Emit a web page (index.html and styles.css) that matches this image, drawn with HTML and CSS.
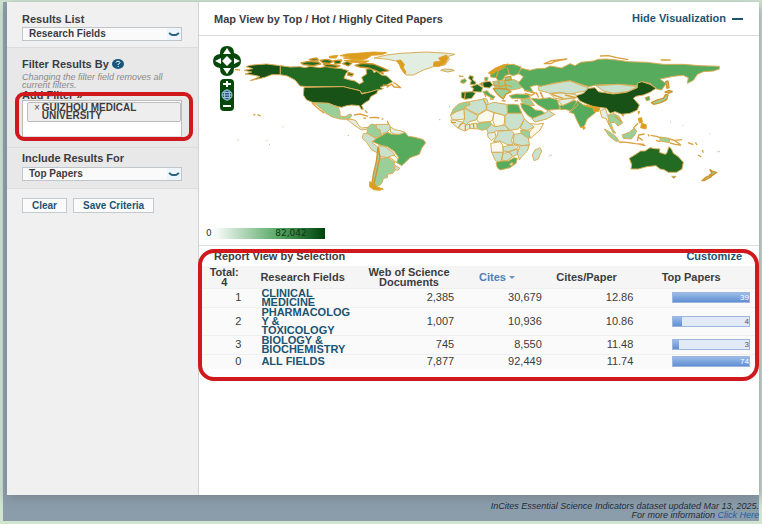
FILE: index.html
```html
<!DOCTYPE html>
<html lang="en">
<head>
<meta charset="utf-8">
<title>InCites Essential Science Indicators</title>
<link rel="stylesheet" href="styles.css">
</head>
<body>
<div class="frame">
  <div class="page">
    <aside class="sidebar">
      <section class="group">
        <label class="label" for="results-list">Results List</label>
        <div class="select-wrap">
          <select id="results-list" class="select"><option>Research Fields</option></select>
          <svg class="chevron" viewBox="0 0 14 12" aria-hidden="true"><path d="M2 5L5 7H9L12 5"/></svg>
        </div>
      </section>
      <section class="group group-filter">
        <h2 class="label">Filter Results By
          <svg class="help" viewBox="0 0 12 10" aria-hidden="true"><ellipse cx="6" cy="5" rx="6" ry="5"/><path d="M4 3.6Q4.300 2.200 6 2.200Q8 2.300 8 3.700Q7.800 4.700 6.200 5.200V6M6.200 7V8"/></svg>
        </h2>
        <p class="note">Changing the filter field removes all current filters.</p>
        <p class="label add">Add Filter »</p>
        <div class="filter-box">
          <div class="tag"><button class="remove" type="button" aria-label="Remove">×</button><span>GUIZHOU MEDICAL UNIVERSITY</span></div>
        </div>
        <div class="mark mark-filter"></div>
      </section>
      <section class="group group-include">
        <label class="label" for="include">Include Results For</label>
        <div class="select-wrap">
          <select id="include" class="select"><option>Top Papers</option></select>
          <svg class="chevron" viewBox="0 0 14 12" aria-hidden="true"><path d="M2 5L5 7H9L12 5"/></svg>
        </div>
      </section>
      <div class="actions">
        <button class="btn" type="button">Clear</button>
        <button class="btn" type="button">Save Criteria</button>
      </div>
    </aside>
    <main class="main">
      <header class="bar">
        <h1 class="title">Map View by Top / Hot / Highly Cited Papers</h1>
        <a class="link hide" href="#">Hide Visualization <span class="dash"></span></a>
      </header>
      <section class="map-area">
        <svg class="map" viewBox="597 108 1680 576" role="img">
          <g class="land" transform="translate(600 0)">
            <path class="c6" d="M241 197L200 192 170 194 150 196 138 200 158 206 132 211 155 216 135 222 165 226 180 230 150 242 195 232 215 224 241 224Z"/>
            <path class="c5" d="M241 197L270 201 300 200 315 203 330 199 360 203 380 199 395 203 425 206 445 212 437 222 432 235 450 240 465 243 478 252 490 246 485 232 500 222 498 208 515 205 522 218 530 214 545 225 560 228 578 245 560 255 540 262 550 266 530 272 510 276 485 280 480 272 445 264 430 260 320 260 300 258 285 240 262 228 241 224Z"/>
            <path class="c6" d="M312 262L430 260 480 272 485 282 510 276 535 268 530 280 512 290 508 300 495 308 485 316 490 328 484 328 478 317 455 315 440 317 425 322 415 320 400 316 385 310 340 308 320 300 310 285Z"/>
            <path class="c3" d="M340 308L385 310 400 316 415 322 420 335 420 348 435 350 450 342 456 345 448 356 435 358 420 357 395 350 375 338 365 328 350 315Z"/>
            <path class="line" d="M336 309L350 322 372 340M105 209L120 210M560 262L575 252 582 261 602 263 588 252 580 248M160 345L166 343M172 344L178 346 182 349M462 345L480 342 504 349M508 353L528 352 538 354M490 354L498 355M545 357L550 357M562 362L568 380M495 331L502 339"/>
            <path class="c1" d="M440 358L456 358 468 362 474 374 485 384 503 382 500 388 484 390 465 377 448 364Z"/>
            <path class="c5 thick" d="M303 189L325 184 355 186 362 192 340 197 310 194ZM328 178L350 174 355 180 336 182ZM360 181L382 178 400 184 388 190 368 188ZM402 182L425 180 420 190 405 191ZM370 192L395 194 420 197 406 203 378 200ZM428 191L442 184 455 190 445 198ZM465 196L485 190 520 192 545 202 566 212 545 216 550 222 528 212 505 204 480 201ZM445 217L460 222 456 228 443 225ZM548 255L566 257"/>
            <path class="gold" d="M388 169L414 166 408 174 388 174ZM420 167L440 162 470 160 520 156 560 158 545 164 515 166 500 176 482 180 460 179 430 174 450 171ZM432 181L475 182 506 183 496 188 456 187Z"/>
            <path class="c1" d="M522 174L560 165 600 160 680 156 745 160 765 163 745 169 748 178 735 195 700 200 670 210 640 225 618 225 605 208 600 195 595 185 565 178Z"/>
            <path class="gold" d="M590 182L602 180 613 193 610 203 618 216 615 222 604 207 598 194ZM716 174L740 165 744 175 735 191 718 199 700 198 702 186 722 184Z"/>
            <path class="c2" d="M722 211L733 207 757 208 763 212 743 216Z"/>
          </g>
          <g class="land" transform="translate(900 135)">
            <path class="c3" d="M205 245L215 237 228 240 240 258 245 272 230 278 215 272 200 265Z"/>
            <path class="c2" d="M228 238L268 238 272 250 260 262 243 268 240 254 230 250Z"/>
            <path class="c1" d="M270 245L285 254 300 257 315 262 305 270 285 268 272 262Z"/>
            <path class="c2" d="M190 266L203 266 228 280 215 292 232 305 236 325 215 315 200 292 187 280ZM236 302L252 303 275 318 285 330 268 338 240 335Z"/>
            <path class="c0" d="M266 335L282 330 298 346 292 354Z"/>
            <path class="c4" d="M245 272L262 262 275 268 300 268 315 262 325 274 345 277 370 284 377 293 365 310 358 328 330 338 318 350 305 362 290 352 296 338 282 318 262 305 240 300 218 290 230 280Z"/>
            <path class="c3" d="M242 340L262 338 285 352 282 362 290 370 278 385 262 388 262 398 250 400 247 412 240 420 230 425 222 415 230 380Z"/>
            <path class="c2" d="M285 361L300 370 292 376 283 372Z"/>
            <path class="c3 thick" d="M234 308L240 338 234 360 228 390 222 416 216 414 220 388 229 350Z"/>
            <path class="gold" d="M209 410L224 416 231 426 250 432 239 436 221 434 209 425Z"/>
            <path class="speck" d="M143 271h4M-188 285h4M-53 245h3M-101 286h3M-93 298h3"/>
          </g>
          <g class="land" transform="translate(1320 135)">
            <path class="c3" d="M62 175L85 170 90 180 75 190 58 200 45 202 32 210 40 192 55 178Z"/>
            <path class="c2" d="M88 170L130 162 138 180 140 192 115 208 105 205 72 186 90 180ZM130 160L140 162 145 175 138 180ZM140 180L160 172 200 178 203 205 195 212 160 202 140 195Z"/>
            <path class="c4" d="M203 178L222 178 236 180 238 188 246 205 203 205Z"/>
            <path class="c1" d="M32 210L50 200 72 192 74 222 45 225 35 222Z"/>
            <path class="c2" d="M72 190L105 207 115 212 108 225 88 230 78 240 68 232 74 222Z"/>
            <path class="c0" d="M115 210L140 195 162 203 158 225 150 230 118 232 110 225ZM162 203L195 212 193 235 180 248 165 245 158 225ZM282 247L264 235 290 238 311 235 300 255 272 280 266 262ZM152 295L180 290 188 300 190 322 155 322Z"/>
            <path class="c2" d="M195 212L203 205 245 205 253 221 245 240 235 252 210 256 195 240ZM253 222L265 232 282 246 262 256 242 252 243 240Z"/>
            <path class="c3" d="M242 256L269 258 268 280 255 278 243 265ZM112 235L150 230 155 238 140 252 125 256 112 250Z"/>
            <path class="c1" d="M32 225L45 225 68 232 78 240 110 234 112 252 90 250 75 258 55 250 40 238Z"/>
            <path class="line" d="M32 232L48 233M55 249L62 238 70 234M76 257L76 240M90 250L88 236M102 251L100 235"/>
            <path class="c2" d="M140 252L155 238 165 245 195 240 207 256 165 258 160 268 145 265ZM175 258L212 256 222 265 215 285 218 300 200 298 180 288 160 290 170 275ZM222 268L243 265 265 280 268 300 245 302 220 295ZM190 305L215 300 235 300 228 312 205 320 190 318ZM240 302L268 300 262 318 245 335 238 345 232 325ZM155 322L190 322 185 345 175 352 165 345ZM188 325L208 322 218 335 200 348 185 345ZM208 320L232 312 232 328 218 335ZM285 315L300 308 305 318 295 342 282 347 277 330Z"/>
            <path class="c1" d="M142 265L165 262 168 275 155 286 145 278ZM222 298L235 304 230 312"/>
            <path class="c4" d="M168 352L185 348 205 348 222 338 232 340 228 355 210 368 180 375 172 368Z"/>
            <path class="c1" d="M209 357L217 352 219 358 212 362Z"/>
            <path class="c5" d="M64 142L98 140 106 145 95 160 75 163 64 158ZM92 125L112 118 128 128 124 141 98 140 100 130ZM88 92L100 94 98 104 108 112 104 119 90 118 94 107 86 100Z"/>
            <path class="c4" d="M63 106L75 101 80 108 72 115 62 113ZM128 140L142 137 150 147 165 155 160 162 135 148ZM118 117L128 112 129 124ZM134 98L144 97 143 106 135 108Z"/>
            <path class="line" d="M76 143L73 162M134 146L137 156M150 162L160 163M57 93L70 95M185 167L197 168M224 168L234 166"/>
            <path class="c6" d="M128 112L150 109 158 120 148 129 130 126Z"/>
            <path class="c3" d="M158 110L190 105 222 104 255 120 240 130 215 135 190 130 165 128Z"/>
            <path class="c3 thick" d="M160 130L200 132 213 140 197 148 190 162 178 153 168 142ZM195 97L212 94 214 104 197 106Z"/>
            <path class="line" d="M158 119L180 124 200 120 216 126M176 110L178 128M193 106L198 130"/>
            <path class="c4" d="M150 82L165 72 190 60 220 58 243 66 240 85 220 92 208 88 195 92 188 105 175 108 168 98 152 96Z"/>
            <path class="gold" d="M145 84L165 70 188 60 205 57 188 66 170 78 156 88Z"/>
            <path class="line" d="M168 98L176 76 198 66M202 68L208 86"/>
            <path class="c4" d="M208 152L230 147 265 149 272 157 250 162 235 160 215 160ZM242 175L265 178 286 195 304 197 315 205 310 212 280 222 262 210 245 188ZM272 160L298 162 330 158 352 165 360 192 322 196 295 180Z"/>
            <path class="c3" d="M242 164L268 160 284 182 265 180 248 174Z"/>
            <path class="c2" d="M275 221L315 205 325 197 344 208 320 222 285 231Z"/>
            <path class="line" d="M252 136L285 144 276 151 254 145M288 142L296 157M302 143L308 156"/>
            <path class="speck" d="M27 186l4-2M-3 224h4M308 304h2M326 333h3M334 331h2"/>
          </g>
          <g class="land" transform="translate(1650 135)">
            <path class="c4" d="M-85 70L-60 76-40 71-15 70 0 63 35 69 60 56 75 62 92 52 130 48 145 43 170 42 200 45 235 50 290 52 340 58 400 58 450 62 508 64 508 72 490 78 460 80 442 88 430 106 412 115 415 98 400 91 370 94 330 102 348 116 335 135 320 132 300 115 275 110 260 122 205 118 140 120 115 125 60 107 10 115-10 120-20 128-40 120-60 125-50 142-75 136-95 115-80 95-95 85Z"/>
            <path class="line" d="M-17 56L5 47 50 42 15 49 2 56ZM150 33L175 32 200 38 235 44M332 45L362 45"/>
            <path class="c2" d="M-35 125L0 118 30 112 60 108 85 118 115 128 108 138 85 142 60 148 30 142 0 145-35 135ZM138 122L205 118 262 125 235 140 190 145 160 138Z"/>
            <path class="c1" d="M0 146L30 144 78 148 80 158 40 163 14 160ZM24 166L50 160 76 158 60 172 38 182Z"/>
            <path class="line" d="M-30 140L-20 160M5 148L40 160M45 150L78 158"/>
            <path class="c4" d="M28 180L38 182 60 172 75 165 84 180 65 198 45 193 32 194ZM82 167L100 180 130 188 150 190 130 208 112 222 102 245 92 248 80 225 72 206 58 202 68 190ZM285 158L298 154 300 164 290 168Z"/>
            <path class="c6" d="M78 152L100 145 115 130 135 128 145 140 190 147 230 142 262 128 262 115 275 110 300 118 318 130 300 142 280 150 258 154 250 160 268 180 262 195 240 205 215 208 195 200 180 205 170 190 130 185 105 175 90 168Z"/>
            <path class="gold" d="M100 180L128 184 150 190 146 199 132 200 130 190ZM96 244L106 248 101 254ZM216 209L222 210 219 214ZM264 200L269 199 266 208ZM265 220L275 218 277 232 268 234ZM275 234L289 240 288 252 272 248Z"/>
            <path class="c3 thick" d="M304 173L324 164 340 160 347 148 354 150 350 164 334 172 312 178ZM345 141L357 136 367 140 356 144ZM347 110L354 108 357 128 351 130Z"/>
            <path class="c1" d="M150 198L166 190 172 208 181 226 177 240 168 220 156 218Z"/>
            <path class="c3" d="M174 210L192 206 207 214 218 234 204 243 194 232 182 233 190 255 198 264 190 264 177 240ZM163 252L178 260 198 275 207 288 198 289 178 274ZM216 270L238 262 252 249 260 258 253 272 244 282 220 280ZM330 276L358 280 358 293 330 288Z"/>
            <path class="line" d="M194 213L205 222 214 230M206 291L230 292 256 296 283 298M268 298L286 302M262 288L266 270 284 267M264 276L278 286M294 268L298 274M250 249L264 235M302 271L320 274 330 278M318 286L330 290M358 282L373 286 392 300 376 298 360 294M376 286L396 284M414 293L430 299M441 300L436 292M444 330L454 336M457 315L460 323"/>
            <path class="c5" d="M238 340L262 325 272 318 285 318 300 308 314 311 330 312 328 322 346 328 350 325 357 305 364 312 370 325 385 335 400 352 396 372 380 382 355 382 342 374 330 372 318 362 290 365 265 372 243 372 245 358ZM365 394L378 394 372 400Z"/>
            <path class="c3 thick" d="M480 374L488 379 500 382 486 392 479 389 486 386ZM480 391L484 395 462 407 456 407 466 398Z"/>
            <path class="speck" d="M503 320h6M360 231h3M398 241h2M478 266h2M0 330h3"/>
          </g>
        </svg>
        <div class="controls">
          <div class="pan">
            <svg class="pan-bg" viewBox="0 0 28 30" aria-hidden="true"><path d="M7 7Q7 0 14 0T21 7Q28 9 28 15T21 22Q21 30 14 30T7 22Q0 21 0 15T7 8ZM14 10L9 15 14 20 19 15Z"/></svg>
            <button class="up" type="button" aria-label="Pan up"><svg viewBox="0 0 8 8"><path d="M0 7L4 1 8 7Z"/></svg></button>
            <button class="left" type="button" aria-label="Pan left"><svg viewBox="0 0 8 8"><path d="M7 1V7L1 4Z"/></svg></button>
            <button class="right" type="button" aria-label="Pan right"><svg viewBox="0 0 8 8"><path d="M1 1V7L7 4Z"/></svg></button>
            <button class="down" type="button" aria-label="Pan down"><svg viewBox="0 0 8 8"><path d="M0 1L4 7 8 1Z"/></svg></button>
          </div>
          <div class="zoom">
            <button type="button" aria-label="Zoom in"><svg viewBox="0 0 8 8"><path class="sign" d="M0 4H8M4 1V7"/></svg></button>
            <button type="button" aria-label="Zoom to world"><svg viewBox="0 0 12 12"><g class="globe"><circle cx="6" cy="6" r="5"/><ellipse cx="6" cy="6" rx="2.500" ry="5"/><path d="M1 6H11M2 3.500H10M2 8.500H10"/></g></svg></button>
            <button type="button" aria-label="Zoom out"><svg viewBox="0 0 8 8"><path class="sign" d="M0 4H8"/></svg></button>
          </div>
        </div>
        <div class="legend"><span>0</span><div class="ramp">82,042</div></div>
      </section>
      <section class="report">
        <header class="report-bar">
          <h2 class="title">Report View by Selection</h2>
          <a class="link" href="#">Customize</a>
        </header>
        <table class="table">
          <colgroup><col class="w-num"><col class="w-field"><col class="w-docs"><col class="w-cites"><col class="w-cites"><col class="w-top"></colgroup>
          <thead>
            <tr><th>Total:<br>4</th><th>Research Fields</th><th>Web of Science Documents</th><th class="sorted">Cites <span class="caret"></span></th><th>Cites/Paper</th><th>Top Papers</th></tr>
          </thead>
          <tbody>
            <tr><td>1</td><td><a class="link" href="#">CLINICAL MEDICINE</a></td><td>2,385</td><td>30,679</td><td>12.86</td><td><div class="meter"><div class="fill" style="width:100%"></div><span class="full">39</span></div></td></tr>
            <tr class="tall"><td>2</td><td><a class="link" href="#">PHARMACOLOG<wbr>Y &amp; TOXICOLOGY</a></td><td>1,007</td><td>10,936</td><td>10.86</td><td><div class="meter"><div class="fill" style="width:11%"></div><span>4</span></div></td></tr>
            <tr><td>3</td><td><a class="link" href="#">BIOLOGY &amp; BIOCHEMISTRY</a></td><td>745</td><td>8,550</td><td>11.48</td><td><div class="meter"><div class="fill" style="width:8%"></div><span>3</span></div></td></tr>
            <tr class="short"><td>0</td><td><a class="link" href="#">ALL FIELDS</a></td><td>7,877</td><td>92,449</td><td>11.74</td><td><div class="meter"><div class="fill" style="width:100%"></div><span class="full">74</span></div></td></tr>
          </tbody>
        </table>
        <div class="mark mark-report"></div>
      </section>
    </main>
  </div>
  <footer class="footer">InCites Essential Science Indicators dataset updated Mar 13, 2025.<br>For more information <a href="#">Click Here</a></footer>
</div>
</body>
</html>
```

FILE: styles.css
```css
* { box-sizing: border-box; }

body {
  margin: 0;
  padding: 2px 3px 3px;
  min-height: 100vh;
  display: flex;
  background: #d0e4d0;
  color: #3c3c40;
  font: 11px/9px "Liberation Sans", Arial, sans-serif;
}

h1, h2, p { margin: 0; }
a { color: #1c5472; text-decoration: none; }
button { font-family: inherit; padding: 0; }

.frame {
  flex: 1;
  min-width: 0;
  display: flex;
  flex-direction: column;
  padding-left: 4px;
  background: #8b9dab;
}

.page {
  flex: 1;
  display: flex;
  background: #fff;
  box-shadow: 0 4px 10px #7d8893;
}

/* Sidebar */
.sidebar {
  flex: 0 0 192px;
  background: #f0f0f0;
  border-right: 1px solid #d2d2d2;
}

.group {
  position: relative;
  padding: 13px 15px 6px;
  border-bottom: 1px solid #dcdcdc;
}

.group-filter, .group-include { background: #e8e8e8; }
.group-filter { padding-top: 11px; padding-bottom: 10px; }
.group-include { padding-top: 6px; padding-bottom: 7px; }

.label {
  display: block;
  font-size: 11px;
  font-weight: bold;
  line-height: 8px;
}

h2.label { display: flex; align-items: center; gap: 3px; line-height: 10px; }

.help { width: 12px; height: 10px; fill: #17567c; }
.help path { fill: none; stroke: #fff; }

.select-wrap { position: relative; margin-top: 4px; }
.group-include .select-wrap { margin-top: 5px; }

.select {
  display: block;
  width: 160px;
  height: 14px;
  padding: 0 6px;
  appearance: none;
  border: 1px solid #bfc5c9;
  border-radius: 0;
  background: #fafafa;
  color: #3c3c40;
  font: bold 10px/12px "Liberation Sans", Arial, sans-serif;
}

.chevron {
  position: absolute;
  top: 1px;
  left: 145px;
  width: 14px;
  height: 12px;
  background: #edf4fa;
  fill: none;
  stroke: #2f6480;
  stroke-width: 2;
  pointer-events: none;
}

.note {
  margin-top: 4px;
  color: #8a8a8a;
  font-size: 9px;
  font-style: italic;
  line-height: 8px;
}

.add { margin-top: 2px; }

.filter-box {
  height: 37px;
  margin-top: 1px;
  padding: 1px 0 0 4px;
  width: 160px;
  border: 1px solid #bdbdbd;
  border-bottom-color: #ddd;
  background: #fff;
}

.tag {
  display: flex;
  gap: 2px;
  height: 20px;
  padding: 1px 3px 0 6px;
  border: 1px solid #bcbcbc;
  border-radius: 2px;
  background: #eee;
  font-size: 10px;
  font-weight: bold;
  line-height: 8px;
}

.remove {
  width: 6px;
  height: 8px;
  border: 0;
  background: none;
  color: #555;
  font-size: 10px;
  line-height: 8px;
}

.mark {
  position: absolute;
  border: 4px solid #cf191d;
  pointer-events: none;
}

.mark-filter { inset: 44px 5px 6px 8px; border-radius: 9px; }

.actions { display: flex; gap: 6px; padding: 9px 15px; }

.btn {
  height: 15px;
  padding: 0 9px;
  border: 1px solid #c3cacf;
  background: #fbfbfb;
  color: #1c5472;
  font-size: 10px;
  font-weight: bold;
}

/* Map */
.main { flex: 1; min-width: 0; }

.bar, .report-bar {
  display: flex;
  align-items: center;
  justify-content: space-between;
}

.bar { height: 34px; padding: 0 16px 0 15px; border-bottom: 1px solid #dcdcdc; }
.title { font-size: 11px; line-height: 12px; }
.link { color: #1c5472; font-weight: bold; }
.hide { display: flex; align-items: center; gap: 6px; }
.dash { width: 11px; height: 2px; background: #1c5472; }

.map-area { position: relative; padding-bottom: 6px; border-bottom: 1px solid #d9dde8; }
.map { display: block; width: 100%; }
.land { stroke: #d9ae55; stroke-width: 3; stroke-linejoin: round; }
.thick { stroke: #cf952b; stroke-width: 4; }
.line { fill: none; stroke: #dba03c; stroke-width: 4; }
.speck { fill: none; stroke: #cbb68e; stroke-width: 3; }
.gold { fill: #dc9c20; stroke: #dfa52e; }
.c0 { fill: #fbf8ec; }
.c1 { fill: #e1eee1; }
.c2 { fill: #c9e1cd; }
.c3 { fill: #9bcf99; }
.c4 { fill: #57ab5c; }
.c5 { fill: #236b23; }
.c6 { fill: #185216; }

.controls { position: absolute; top: 10px; left: 14px; width: 28px; }
.controls button { border: 0; background: none; line-height: 0; }
.controls button svg { width: 8px; height: 8px; fill: #fff; }

.pan {
  position: relative;
  display: grid;
  grid-template: 10px 10px 10px / 9px 10px 9px;
}

.pan-bg { position: absolute; width: 28px; height: 30px; fill: #06480b; fill-rule: evenodd; }
.pan button { position: relative; }
.up { grid-area: 1 / 2; }
.left { grid-area: 2 / 1; }
.right { grid-area: 2 / 3; }
.down { grid-area: 3 / 2; }

.zoom {
  display: grid;
  grid-template-rows: 10px 12px 10px;
  width: 14px;
  margin: 3px auto 0;
  border-radius: 4px;
  background: #06480b;
}

.sign { stroke: #fff; stroke-width: 2; }
.zoom button:nth-child(2) svg { width: 12px; height: 12px; }
.globe { fill: #245a7c; stroke: #9fc4dc; }

.legend {
  display: flex;
  align-items: center;
  gap: 1px;
  padding-left: 7px;
  color: #333;
  font: 9px/11px "DejaVu Sans", sans-serif;
}

.ramp {
  width: 112px;
  padding-right: 18px;
  background: linear-gradient(90deg, #fff, #58a866 58%, #00420a);
  color: #123312;
  text-align: right;
}

/* Report */
.report { position: relative; }
.report-bar { height: 20px; padding: 0 17px 0 15px; }

.table { width: 100%; border-collapse: collapse; table-layout: fixed; background: #fafafa; }
.w-num { width: 9%; }
.w-field { width: 19%; }
.w-docs { width: 19%; }
.w-cites { width: 16%; }
.w-top { width: 21%; }

th { height: 22px; padding: 0 8px; background: #f5f5f5; line-height: 10px; white-space: nowrap; }
th:first-child { padding: 0; }
th:nth-child(3) { white-space: normal; }
th:nth-child(4), th:nth-child(5) { padding: 0 24px 0 4px; }
th:nth-child(6) { padding: 0 18px 0 0; }

td { height: 19px; padding: 0 8px 0 0; border-top: 1px solid #efefef; text-align: right; }
td:nth-child(2) { padding-left: 12px; text-align: left; }
td:nth-child(4) { padding-right: 10px; }
td:nth-child(6) { padding: 0 9px 0 31px; }
.tall td { height: 27px; }
.short td { height: 15px; }

.sorted { color: #4f7db5; }
.caret {
  display: inline-block;
  border: 3px solid transparent;
  border-top-color: #6a93c4;
  border-bottom: 0;
  vertical-align: middle;
}

.meter {
  position: relative;
  height: 11px;
  border: 1px solid #9fb6dc;
  background: #e2e9f7;
}

.fill { height: 100%; background: linear-gradient(#9bbce9, #5f8fd3); }
.meter span { position: absolute; right: 0; top: 0; font-size: 8px; color: #555; }
.meter .full { color: #fff; }

.mark-report { inset: 3px 0 -12px -1px; border-radius: 16px; }

/* Footer */
.footer {
  padding: 7px 0 1px;
  color: #1f2b36;
  font-size: 9px;
  font-style: italic;
  text-align: right;
}

.footer a { color: #1f5fa0; }
```
